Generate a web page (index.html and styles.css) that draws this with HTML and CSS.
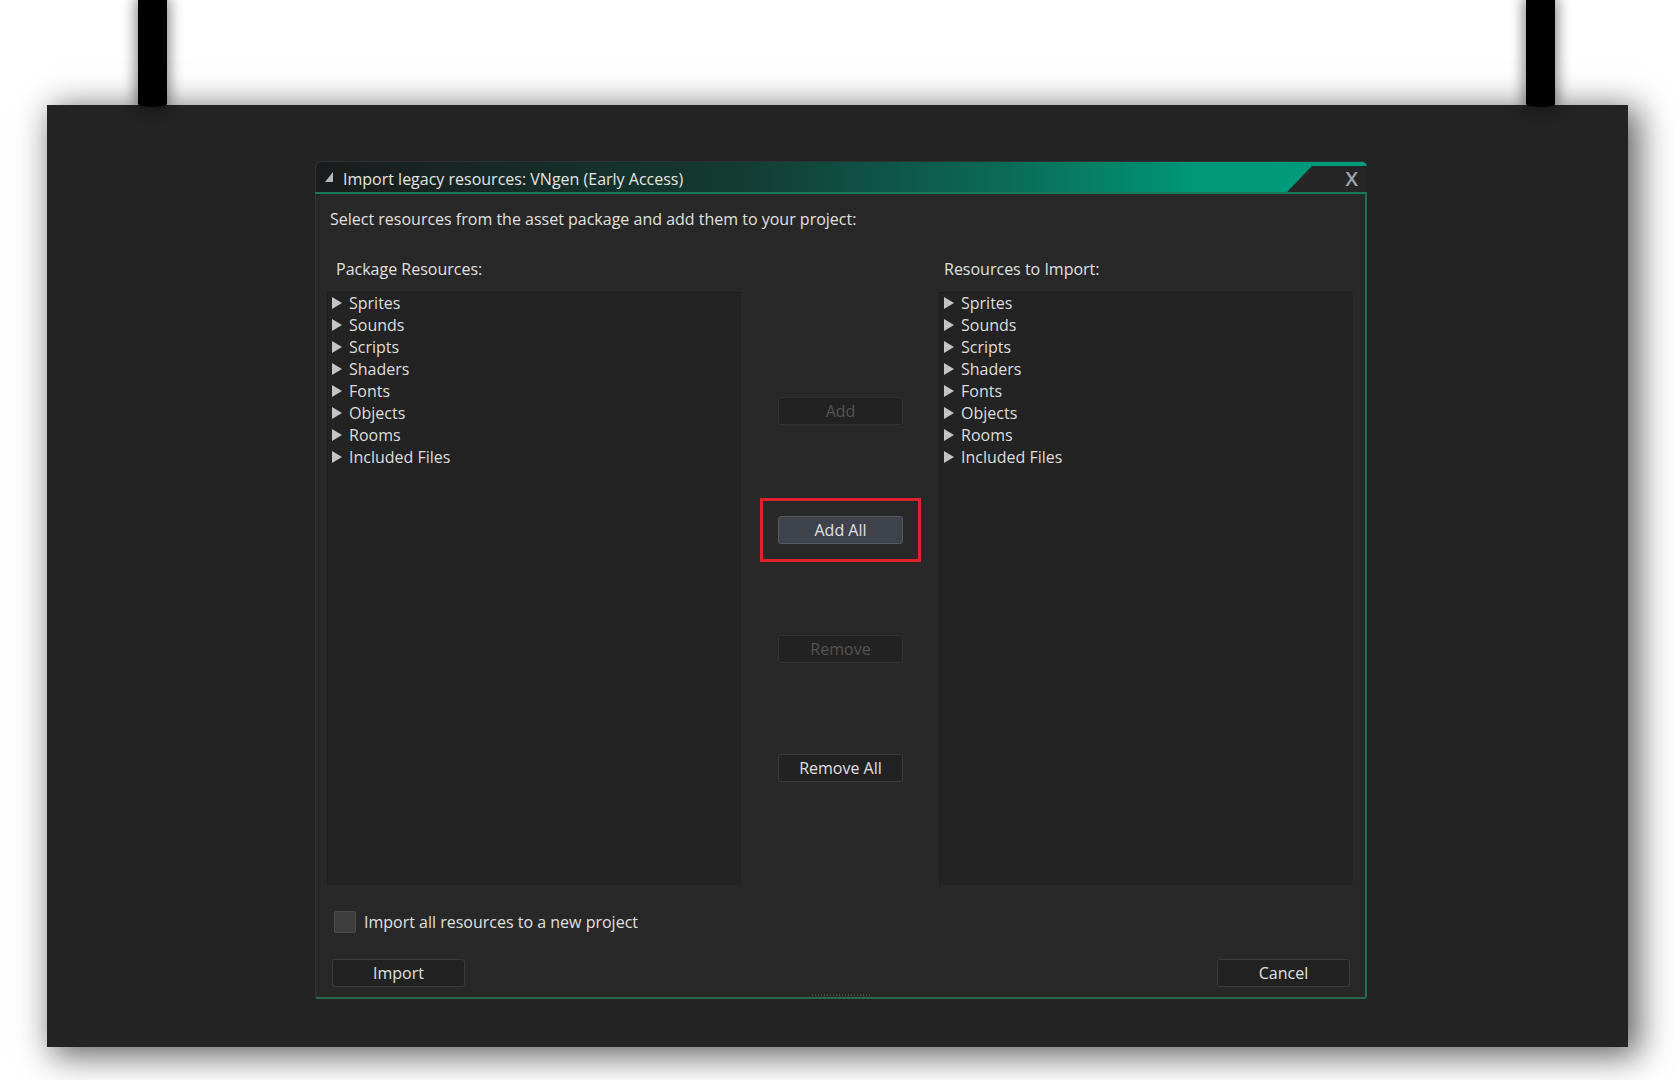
FILE: index.html
```html
<!DOCTYPE html>
<html>
<head>
<meta charset="utf-8">
<link rel="stylesheet" href="styles.css">
</head>
<body>
<div class="stage">
  <div class="hangers">
    <div class="pillar"></div>
    <div class="pillar"></div>
  </div>
  <div class="panel">
    <div class="dialog">
      <div class="titlebar">
        <svg class="title-icon" width="9" height="10" viewBox="0 0 9 10"><polygon points="8,0 8,10 0,10" fill="#b4b7bb"/></svg>
        <span class="title-text">Import legacy resources: VNgen (Early Access)</span>
        <div class="close-tab"><span class="close-x">X</span></div>
      </div>
      <div class="body">
        <div class="intro">Select resources from the asset package and add them to your project:</div>
        <div class="columns">
          <div class="col">
            <div class="col-label">Package Resources:</div>
            <ul class="tree">
              <li><span class="arrow"></span>Sprites</li>
              <li><span class="arrow"></span>Sounds</li>
              <li><span class="arrow"></span>Scripts</li>
              <li><span class="arrow"></span>Shaders</li>
              <li><span class="arrow"></span>Fonts</li>
              <li><span class="arrow"></span>Objects</li>
              <li><span class="arrow"></span>Rooms</li>
              <li><span class="arrow"></span>Included Files</li>
            </ul>
          </div>
          <div class="mid">
            <button class="btn disabled">Add</button>
            <div class="highlight"><button class="btn active">Add All</button></div>
            <button class="btn disabled">Remove</button>
            <button class="btn">Remove All</button>
          </div>
          <div class="col">
            <div class="col-label right">Resources to Import:</div>
            <ul class="tree">
              <li><span class="arrow"></span>Sprites</li>
              <li><span class="arrow"></span>Sounds</li>
              <li><span class="arrow"></span>Scripts</li>
              <li><span class="arrow"></span>Shaders</li>
              <li><span class="arrow"></span>Fonts</li>
              <li><span class="arrow"></span>Objects</li>
              <li><span class="arrow"></span>Rooms</li>
              <li><span class="arrow"></span>Included Files</li>
            </ul>
          </div>
        </div>
        <label class="check-row"><span class="checkbox"></span>Import all resources to a new project</label>
        <div class="actions">
          <button class="btn wide">Import</button>
          <button class="btn wide">Cancel</button>
        </div>
        <div class="grip"></div>
      </div>
    </div>
  </div>
</div>
</body>
</html>
```

FILE: styles.css
```css
html, body {
  margin: 0;
  padding: 0;
  background: #ffffff;
}
body {
  font-family: "Open Sans", "Noto Sans", sans-serif;
  font-size: 16px;
  color: #e0e0e0;
  overflow: hidden;
  height: 1080px;
}
.stage {
  margin-left: 47px;
  width: 1581px;
}
.hangers {
  height: 105px;
  display: flex;
  justify-content: space-between;
  padding: 0 73px 0 91px;
  position: relative;
  z-index: 2;
}
.pillar {
  width: 29px;
  height: 107px;
  background: #000;
  border-radius: 0 0 14px 14px / 0 0 3px 3px;
  box-shadow: 0 0 14px 3px rgba(0,0,0,0.45);
}
.panel {
  height: 942px;
  background: #232323;
  box-shadow: 8px 6px 32px 3px rgba(0,0,0,0.62);
  padding: 56px 0 0 268px;
  box-sizing: border-box;
  position: relative;
  z-index: 1;
}
.dialog {
  width: 1052px;
  height: 838px;
  display: flex;
  flex-direction: column;
}
.titlebar {
  height: 31px;
  border-bottom: 2px solid #1a7a55;
  border-radius: 5px 6px 0 0;
  background: linear-gradient(90deg, #1a1c1c 0%, #133a32 40%, #0b6a55 65%, #009a7b 85%, #009a7c 100%);
  display: flex;
  align-items: center;
  box-shadow: inset 1px 1px 0 #2e3232;
}
.title-icon {
  margin-left: 10px;
  margin-top: 0px;
}
.title-text {
  margin-left: 9px;
  flex: 1;
  color: #e4e4e4;
  line-height: 20px;
  margin-top: 4px;
}
.close-tab {
  align-self: flex-end;
  width: 80px;
  height: 26px;
  background: #262626;
  clip-path: polygon(25px 0, 100% 0, 100% 100%, 0 100%);
  display: flex;
  align-items: center;
  justify-content: flex-end;
}
.close-x {
  color: #a3a7ad;
  font-family: "Open Sans", sans-serif;
  font-size: 20px;
  font-weight: 600;
  line-height: 20px;
  margin-right: 9px;
  margin-top: -1px;
}
.body {
  flex: 1;
  background: #282828;
  border-style: solid;
  border-width: 0 2px 2px 1px;
  border-color: #2a6a4d #2a6a4d #2a6a4d #363838;
  border-radius: 0 0 3px 3px;
  padding: 14px 11px 0 11px;
  display: flex;
  flex-direction: column;
  position: relative;
}
.intro {
  line-height: 22px;
  padding-left: 3px;
}
.columns {
  display: grid;
  grid-template-columns: 415px 197px 415px;
  margin-top: 28px;
}
.col {
  display: flex;
  flex-direction: column;
}
.col-label {
  line-height: 22px;
  padding-left: 9px;
  margin-bottom: 12px;
}
.col-label.right {
  padding-left: 5px;
}
.tree {
  list-style: none;
  margin: 0;
  padding: 0;
  height: 594px;
  box-sizing: border-box;
  background: #232323;
  border: 1px solid #1d1d1d;
  border-right-color: #2a2a2a;
  border-bottom-color: #2a2a2a;
}
.tree li {
  height: 22px;
  line-height: 22px;
  display: flex;
  align-items: center;
  padding-left: 4px;
  color: #dedede;
}
.tree li:first-child {
  margin-top: -1px;
}
.arrow {
  width: 0;
  height: 0;
  border-style: solid;
  border-width: 6px 0 6px 10px;
  border-color: transparent transparent transparent #c4c4c4;
  margin-right: 7px;
}
.mid {
  display: flex;
  flex-direction: column;
  align-items: center;
  padding-top: 139px;
  gap: 91px;
}
.btn {
  width: 125px;
  height: 28px;
  box-sizing: border-box;
  background: #222222;
  border: 1px solid #3c3c3c;
  border-radius: 3px;
  color: #e0e0e0;
  font-family: "Open Sans", "Noto Sans", sans-serif;
  font-size: 16px;
  line-height: 24px;
  padding: 0;
  display: block;
}
.btn.disabled {
  color: #545454;
  border-color: #343434;
}
.btn.active {
  background: #3e434b;
  border-color: #565a60;
}
.highlight {
  border: 3px solid #e3202b;
  padding: 15px;
  margin: -18px 0;
}
.check-row {
  display: flex;
  align-items: center;
  margin-top: 25px;
  padding-left: 7px;
  height: 22px;
  line-height: 22px;
}
.checkbox {
  width: 22px;
  height: 22px;
  box-sizing: border-box;
  background: #3e3e3e;
  border: 1px solid #4c4c4c;
  border-radius: 2px;
  margin-right: 8px;
}
.actions {
  display: flex;
  justify-content: space-between;
  margin-top: 26px;
  padding: 0 4px 0 5px;
}
.btn.wide {
  width: 133px;
}
.grip {
  align-self: center;
  margin-top: auto;
  width: 58px;
  height: 2px;
  margin-bottom: 1px;
  background: repeating-linear-gradient(90deg, #4a4a4a 0 1px, transparent 1px 3px);
}
```
